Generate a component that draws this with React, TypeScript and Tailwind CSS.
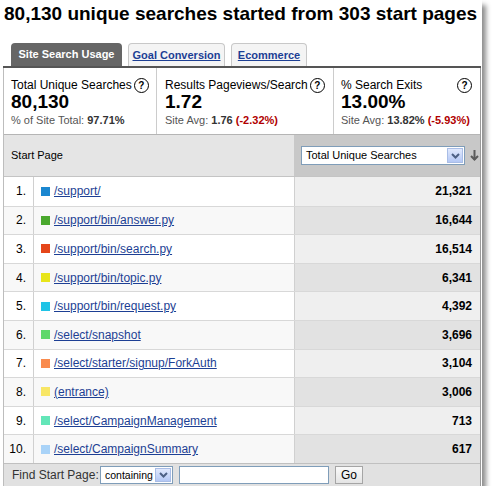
import React from "react";

const rows = [
  { n: "1.", color: "#1b87d0", name: "/support/", v: "21,321" },
  { n: "2.", color: "#4aa82e", name: "/support/bin/answer.py", v: "16,644" },
  { n: "3.", color: "#e5461a", name: "/support/bin/search.py", v: "16,514" },
  { n: "4.", color: "#e8e51a", name: "/support/bin/topic.py", v: "6,341" },
  { n: "5.", color: "#1fc3e6", name: "/support/bin/request.py", v: "4,392" },
  { n: "6.", color: "#5ed86b", name: "/select/snapshot", v: "3,696" },
  { n: "7.", color: "#f98b4e", name: "/select/starter/signup/ForkAuth", v: "3,104" },
  { n: "8.", color: "#f8e665", name: "(entrance)", v: "3,006" },
  { n: "9.", color: "#63e6b8", name: "/select/CampaignManagement", v: "713" },
  { n: "10.", color: "#a9d3f8", name: "/select/CampaignSummary", v: "617" },
];

function Help() {
  return (
    <span className="inline-flex items-center justify-center w-[15px] h-[15px] rounded-full border-[1.5px] border-black text-[10px] font-bold leading-none text-black bg-white">
      ?
    </span>
  );
}

function DropBtn() {
  return (
    <span className="flex items-center justify-center w-[16px] h-full shrink-0 border border-[#a9bde6] bg-gradient-to-b from-[#e1e9fd] to-[#b4c8f5]">
      <svg width="9" height="6" viewBox="0 0 9 6">
        <path d="M1 1 L4.5 4.5 L8 1" stroke="#4d6185" strokeWidth="2" fill="none" />
      </svg>
    </span>
  );
}

export default function App() {
  return (
    <div className="bg-white" style={{ fontFamily: '"Liberation Sans", Arial, sans-serif' }}>
      <div className="w-[482px] h-[486px] bg-white shadow-[4px_5px_5px_rgba(0,0,0,0.45)] flex flex-col">
        {/* Title */}
        <div className="h-[43px] pt-[4px] pl-[4px] text-[19px] leading-[19px] font-bold text-black whitespace-nowrap">
          80,130 unique searches started from 303 start pages
        </div>
        {/* Tabs */}
        <div className="h-[23px] flex items-end pl-[11px] gap-[6px]">
          <div className="h-[23px] w-[111px] rounded-t-[4px] bg-[#666666] text-white font-bold text-[11px] leading-[23px] text-center">
            Site Search Usage
          </div>
          <div className="h-[23px] w-[97px] rounded-t-[4px] border border-b-0 border-[#c8c8c8] bg-[#f4f4f4] text-[#1d3f94] font-bold text-[11px] leading-[22px] text-center underline">
            Goal Conversion
          </div>
          <div className="h-[23px] w-[76px] rounded-t-[4px] border border-b-0 border-[#c8c8c8] bg-[#f4f4f4] text-[#1d3f94] font-bold text-[11px] leading-[22px] text-center underline">
            Ecommerce
          </div>
        </div>
        {/* Panel */}
        <div className="ml-[3px] mr-[1px] flex-1 flex flex-col border-l border-r border-l-[#bdbdbd] border-r-[#9a9a9a]">
          <div className="h-[2px] bg-[#555555] -ml-px -mr-px" />
          {/* Metrics */}
          <div className="h-[66px] flex bg-white">
            <div className="w-[153px] border-r border-[#cccccc] pl-[7px] pt-[10px]">
              <div className="flex items-center gap-[2px] text-[12px] leading-[15px] text-black">
                Total Unique Searches <Help />
              </div>
              <div className="text-[19px] leading-[20px] font-bold text-black -mt-px">80,130</div>
              <div className="mt-[2px] text-[11px] leading-[13px] text-[#555]">
                % of Site Total: <span className="font-bold text-[#333]">97.71%</span>
              </div>
            </div>
            <div className="w-[177px] border-r border-[#cccccc] pl-[8px] pt-[10px]">
              <div className="flex items-center gap-[2px] text-[12px] leading-[15px] text-black">
                Results Pageviews/Search <Help />
              </div>
              <div className="text-[19px] leading-[20px] font-bold text-black -mt-px">1.72</div>
              <div className="mt-[2px] text-[11px] leading-[13px] text-[#555]">
                Site Avg: <span className="font-bold text-[#333]">1.76</span>{" "}
                <span className="font-bold text-[#b00000]">(-2.32%)</span>
              </div>
            </div>
            <div className="flex-1 pl-[7px] pr-[8px] pt-[10px]">
              <div className="flex items-center justify-between text-[12px] leading-[15px] text-black">
                <span>% Search Exits</span> <Help />
              </div>
              <div className="text-[19px] leading-[20px] font-bold text-black -mt-px">13.00%</div>
              <div className="mt-[2px] text-[11px] leading-[13px] text-[#555]">
                Site Avg: <span className="font-bold text-[#333]">13.82%</span>{" "}
                <span className="font-bold text-[#b00000]">(-5.93%)</span>
              </div>
            </div>
          </div>
          {/* Header */}
          <div className="h-[43px] flex border-t border-[#b5b5b5] border-b border-b-[#c4c4c4]">
            <div className="w-[290px] bg-[#e5e5e5] flex items-center pl-[7px] text-[11px] text-black">
              Start Page
            </div>
            <div className="flex-1 bg-[#c8c8c8] flex items-center pl-[7px] gap-[5px]">
              <div className="w-[164px] h-[19px] bg-white border border-[#7f9db9] flex items-center justify-between pl-[4px] p-px">
                <span className="text-[11px] text-black leading-none">Total Unique Searches</span>
                <DropBtn />
              </div>
              <svg width="9" height="11" viewBox="0 0 9 11">
                <path d="M4.5 0 V10" stroke="#5a5a5a" strokeWidth="2" />
                <path d="M1 6 L4.5 9.5 L8 6" stroke="#5a5a5a" strokeWidth="2" fill="none" />
              </svg>
            </div>
          </div>
          {/* Rows */}
          <div className="flex flex-col">
            {rows.map((r, i) => {
              const odd = i % 2 === 0;
              return (
                <div
                  key={r.n}
                  className={`h-[28.6px] flex ${i > 0 ? "border-t border-[#d8d8d8]" : ""}`}
                >
                  <div
                    className={`w-[30px] border-r border-[#d0d0d0] flex items-center justify-end pr-[7px] text-[12px] text-black ${odd ? "bg-white" : "bg-[#f8f8f8]"}`}
                  >
                    {r.n}
                  </div>
                  <div
                    className={`w-[260px] flex items-center pl-[7px] gap-[4px] ${odd ? "bg-white" : "bg-[#f8f8f8]"}`}
                  >
                    <span className="w-[9px] h-[9px] inline-block" style={{ backgroundColor: r.color }} />
                    <span className="text-[12px] text-[#1d3f94] underline whitespace-nowrap">{r.name}</span>
                  </div>
                  <div
                    className={`flex-1 border-l border-[#d0d0d0] flex items-center justify-end pr-[8px] text-[12px] font-bold text-black ${odd ? "bg-[#efefef]" : "bg-[#e2e2e2]"}`}
                  >
                    {r.v}
                  </div>
                </div>
              );
            })}
          </div>
          {/* Footer */}
          <div className="flex-1 bg-[#e1e1e1] border-t border-[#c0c0c0] flex items-center pl-[8px] text-[12px] text-[#333]">
            <span className="w-[88px]">Find Start Page:</span>
            <div className="w-[73px] h-[18px] bg-white border border-[#7f9db9] flex items-center justify-between pl-[4px] p-px">
              <span className="text-[10.5px] text-black leading-none whitespace-nowrap">containing</span>
              <DropBtn />
            </div>
            <div className="ml-[6px] w-[150px] h-[18px] bg-white border border-[#7f9db9]" />
            <div className="ml-[6px] w-[28px] h-[18px] border border-[#a5a5a5] bg-gradient-to-b from-[#fafafa] to-[#e4e4e4] flex items-center justify-center text-[12px] text-black">
              Go
            </div>
          </div>
        </div>
      </div>
    </div>
  );
}
